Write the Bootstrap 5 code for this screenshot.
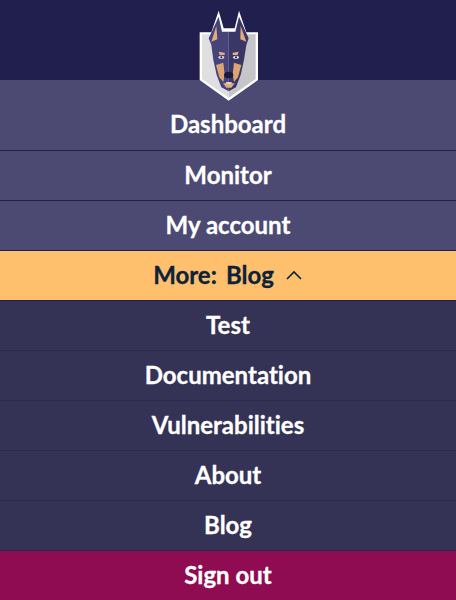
<!DOCTYPE html>
<html lang="en">
<head>
    <meta charset="UTF-8">
    <title>Snyk menu</title>
    <meta name="viewport" content="width=device-width, initial-scale=1">
    <link href="https://cdn.jsdelivr.net/npm/bootstrap@5.3.0/dist/css/bootstrap.min.css" rel="stylesheet">
    <style>
        body { background: #8f0b52; font-family: "Lato", "Open Sans", sans-serif; overflow: hidden; }
        .top-bar { height: 80px; background: #211f4d; }
        .dog-logo { position: absolute; top: 0; left: 178px; width: 100px; height: 110px; }
        .menu-link {
            height: 50px;
            padding-bottom: 2px;
            font-size: 24px;
            font-weight: 700;
            font-variant-ligatures: none;
            -webkit-text-stroke: 0.3px currentColor;
            color: #fff;
            text-decoration: none;
            border-bottom: 1px solid #211f4d;
        }
        .menu-link:hover { color: #fff; }
        .main-link { background: #4c4a73; }
        .main-link.first-link { height: 71px; padding-top: 20px; }
        .more-link { background: #ffc06e; color: #0b2239; }
        .more-link:hover { color: #0b2239; }
        .more-link .more-gap { margin-right: 9px; }
        .more-arrow { margin-left: 11px; }
        .sub-link { background: #343355; border-bottom-color: #29284d; }
        .signout-link { background: #8f0b52; border-bottom: 0; }
    </style>
</head>
<body>
    <div class="top-bar"></div>
    <svg class="dog-logo" viewBox="0 0 300 330" aria-hidden="true">
        <path d="M65 97 H100 L122 32 L137 85 H170 L183 32 L205 97 H240 V240 L152 302 L65 240 Z" fill="#fff"/>
        <path d="M72 103 H152 V293 L72 237 Z" fill="#dfdfe1"/>
        <path d="M152 103 H233 V237 L152 293 Z" fill="#c6c6ca"/>
        <path d="M122 50 L92 115 L100 135 L106 180 L116 225 L130 262 L152 274 V95 H132 Z" fill="#45437a"/>
        <path d="M183 50 L212 115 L205 135 L198 180 L188 225 L174 262 L152 274 V95 H172 Z" fill="#393766"/>
        <path d="M115 78 L100 125 L118 118 Z M188 78 L205 125 L187 118 Z" fill="#e2ad7c"/>
        <path d="M122 155 L140 158 L140 165 L125 165 Z M182 155 L164 158 L164 165 L179 165 Z" fill="#e2ad7c"/>
        <ellipse cx="130" cy="172" rx="9" ry="5" fill="#dcdce4"/>
        <ellipse cx="174" cy="172" rx="9" ry="5" fill="#dcdce4"/>
        <circle cx="130" cy="172" r="3" fill="#1b1a3a"/>
        <circle cx="174" cy="172" r="3" fill="#1b1a3a"/>
        <path d="M114 195 L136 188 L140 222 L136 246 L124 232 Z M190 195 L168 188 L164 222 L168 246 L180 232 Z" fill="#dca472"/>
        <ellipse cx="152" cy="225" rx="14" ry="10" fill="#1b1a3a"/>
        <path d="M135 250 H170 L160 263 H145 Z" fill="#e2ad7c"/>
        <path d="M143 247 H162 L159 251 H146 Z" fill="#f4f4f4"/>
    </svg>
    <nav class="d-flex flex-column">
        <a href="#" class="menu-link main-link first-link d-flex align-items-center justify-content-center">Dashboard</a>
        <a href="#" class="menu-link main-link d-flex align-items-center justify-content-center">Monitor</a>
        <a href="#" class="menu-link main-link d-flex align-items-center justify-content-center">My account</a>
        <a href="#" class="menu-link more-link d-flex align-items-center justify-content-center">
            <span class="more-gap">More:</span><span>Blog</span>
            <svg class="more-arrow" width="18" height="10" viewBox="0 0 18 10" aria-hidden="true"><path d="M2 9 L9 2 L16 9" fill="none" stroke="#0b2239" stroke-width="1.6"/></svg>
        </a>
        <a href="#" class="menu-link sub-link d-flex align-items-center justify-content-center">Test</a>
        <a href="#" class="menu-link sub-link d-flex align-items-center justify-content-center">Documentation</a>
        <a href="#" class="menu-link sub-link d-flex align-items-center justify-content-center">Vulnerabilities</a>
        <a href="#" class="menu-link sub-link d-flex align-items-center justify-content-center">About</a>
        <a href="#" class="menu-link sub-link d-flex align-items-center justify-content-center">Blog</a>
        <a href="#" class="menu-link signout-link d-flex align-items-center justify-content-center">Sign out</a>
    </nav>
    <script src="https://cdn.jsdelivr.net/npm/bootstrap@5.3.0/dist/js/bootstrap.bundle.min.js"></script>
</body>
</html>
